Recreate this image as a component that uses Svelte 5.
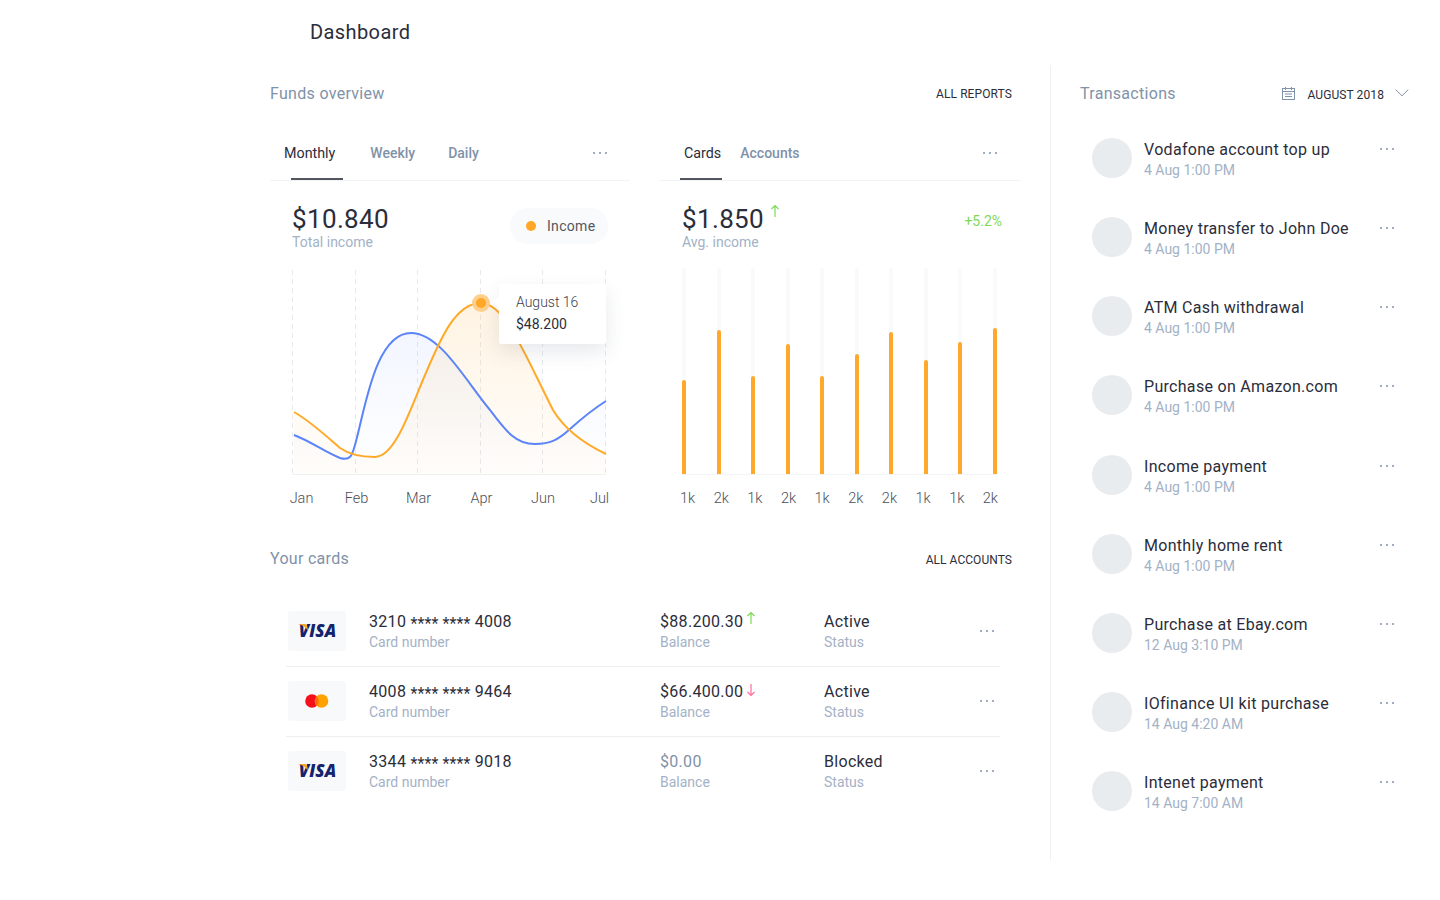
<script>
  const bars = [94, 144, 98, 130, 98, 120, 142, 114, 132, 146];
  const barLabels = ['1k', '2k', '1k', '2k', '1k', '2k', '2k', '1k', '1k', '2k'];
  const grid = [292.5, 355.5, 417.5, 480.5, 542.5, 605.5];
  const months = [
    ['Jan', 301.5], ['Feb', 356.5], ['Mar', 418.5], ['Apr', 481.5], ['Jun', 543], ['Jul', 599.5]
  ];
  const orangeLine = 'M294 412C310 421 325 435 340 448C350 455 362 457 375 457C395 457 410 410 425 375C440 340 455 303 481 303C505 303 525 355 553 410C565 430 585 444 606 454';
  const blueLine = 'M294 435C310 441 325 452 340 458C350 461 352 456 355 445C365 410 375 333 411 333C440 333 465 380 490 410C505 430 515 444 535 444C550 444 558 440 570 429C580 420 595 408 606 401';

  const cards = [
    { brand: 'visa', number: '3210', last: '4008', balance: '$88.200.30', trend: 'up', status: 'Active' },
    { brand: 'mc', number: '4008', last: '9464', balance: '$66.400.00', trend: 'down', status: 'Active' },
    { brand: 'visa', number: '3344', last: '9018', balance: '$0.00', trend: '', status: 'Blocked' }
  ];

  const transactions = [
    ['Vodafone account top up', '4 Aug 1:00 PM'],
    ['Money transfer to John Doe', '4 Aug 1:00 PM'],
    ['ATM Cash withdrawal', '4 Aug 1:00 PM'],
    ['Purchase on Amazon.com', '4 Aug 1:00 PM'],
    ['Income payment', '4 Aug 1:00 PM'],
    ['Monthly home rent', '4 Aug 1:00 PM'],
    ['Purchase at Ebay.com', '12 Aug 3:10 PM'],
    ['IOfinance UI kit purchase', '14 Aug 4:20 AM'],
    ['Intenet payment', '14 Aug 7:00 AM']
  ];
</script>

{#snippet dots()}
  <svg class="dots" width="16" height="4" viewBox="0 0 16 4">
    <circle cx="2" cy="2" r="1" /><circle cx="8" cy="2" r="1" /><circle cx="14" cy="2" r="1" />
  </svg>
{/snippet}

{#snippet arrow(color, down)}
  <svg class="arrow" class:down width="10" height="14" viewBox="0 0 10 14" fill="none" stroke={color} stroke-width="1.2">
    <path d="M5 13V1.5M1.5 5L5 1.5L8.5 5" />
  </svg>
{/snippet}

<div class="page">
  <header class="top"><h1>Dashboard</h1></header>

  <div class="content">
    <main class="left">
      <div class="section-head">
        <h2>Funds overview</h2>
        <span class="link">ALL REPORTS</span>
      </div>

      <div class="panels">
        <section>
          <div class="tabs">
            <span class="tab active monthly">Monthly</span>
            <span class="tab weekly">Weekly</span>
            <span class="tab daily">Daily</span>
            <span class="tabs-more">{@render dots()}</span>
          </div>
          <div class="stats">
            <div>
              <div class="amount">$10.840</div>
              <div class="sub">Total income</div>
            </div>
            <div class="legend"><i></i>Income</div>
          </div>
          <div class="chart">
            <svg width="360" height="260" viewBox="270 260 360 260">
              <defs>
                <linearGradient id="fillOrange" x1="0" y1="0" x2="0" y2="1">
                  <stop offset="0" stop-color="#ffa726" stop-opacity="0.13" />
                  <stop offset="1" stop-color="#ffa726" stop-opacity="0.02" />
                </linearGradient>
                <linearGradient id="fillBlue" x1="0" y1="0" x2="0" y2="1">
                  <stop offset="0" stop-color="#4d7cfe" stop-opacity="0.07" />
                  <stop offset="1" stop-color="#4d7cfe" stop-opacity="0" />
                </linearGradient>
              </defs>
              {#each grid as x}
                <line x1={x} x2={x} y1="270" y2="475" stroke="#e6e9ed" stroke-dasharray="5 4" />
              {/each}
              <line x1="292" x2="606" y1="474.5" y2="474.5" stroke="#f1f2f4" />
              <path d="{blueLine}V475H294Z" fill="url(#fillBlue)" />
              <path d="{orangeLine}V475H294Z" fill="url(#fillOrange)" />
              <path d={blueLine} fill="none" stroke="#5b84f8" stroke-width="2" />
              <path d={orangeLine} fill="none" stroke="#ffa928" stroke-width="2" />
              <circle cx="481" cy="303" r="9" fill="#ffd08c" />
              <circle cx="481" cy="303" r="5" fill="#ffa726" />
              {#each months as [label, x]}
                <text {x} y="503" text-anchor="middle" class="axis">{label}</text>
              {/each}
            </svg>
            <div class="tooltip">
              <div class="tip-date">August 16</div>
              <div class="tip-value">$48.200</div>
            </div>
          </div>
        </section>

        <section>
          <div class="tabs">
            <span class="tab active cards-tab">Cards</span>
            <span class="tab accounts">Accounts</span>
            <span class="tabs-more">{@render dots()}</span>
          </div>
          <div class="stats">
            <div>
              <div class="amount">$1.850<span class="amount-arrow">{@render arrow('#7ed957', false)}</span></div>
              <div class="sub">Avg. income</div>
            </div>
            <div class="delta">+5.2%</div>
          </div>
          <div class="bars">
            {#each bars as h}
              <div class="track"><div class="fill" style="height: {h}px"></div></div>
            {/each}
          </div>
          <div class="bar-labels">
            {#each barLabels as l}<span>{l}</span>{/each}
          </div>
        </section>
      </div>

      <div class="section-head cards-head">
        <h2>Your cards</h2>
        <span class="link">ALL ACCOUNTS</span>
      </div>

      <div class="card-list">
        {#each cards as c}
          <div class="card-row">
            <div class="brand">
              {#if c.brand === 'visa'}
                <span class="visa">VISA</span>
                <svg class="flare" width="10" height="7" viewBox="0 0 10 7"><path d="M0 0H7C8.500 0 9 1 9.300 2.500L10 6.500C8 3.500 4.500 1.200 0 0Z" fill="#f7a823" /></svg>
              {:else}
                <svg width="24" height="14" viewBox="0 0 24 14">
                  <circle cx="7" cy="7" r="6.800" fill="#f4101a" />
                  <circle cx="16.500" cy="7" r="6.800" fill="#ffa200" />
                  <path d="M11.750 2.200A6.800 6.800 0 0 1 11.750 11.800A6.800 6.800 0 0 1 11.750 2.200Z" fill="#ff6a10" />
                </svg>
              {/if}
            </div>
            <div class="col number">
              <div class="val">{c.number} <span class="stars">**** ****</span> {c.last}</div>
              <div class="sub">Card number</div>
            </div>
            <div class="col balance">
              <div class="val" class:zero={!c.trend}>
                {c.balance}{#if c.trend === 'up'}<span class="row-arrow">{@render arrow('#7ed957', false)}</span>{:else if c.trend === 'down'}<span class="row-arrow drop">{@render arrow('#ff6b9a', true)}</span>{/if}
              </div>
              <div class="sub">Balance</div>
            </div>
            <div class="col status">
              <div class="val">{c.status}</div>
              <div class="sub">Status</div>
            </div>
            <div class="row-more">{@render dots()}</div>
          </div>
        {/each}
      </div>
    </main>

    <aside class="right">
      <div class="right-head">
        <h2>Transactions</h2>
        <div class="date">
          <svg class="cal" width="15" height="15" viewBox="0 0 15 15" fill="none" stroke="#7f93ab">
            <rect x="1.500" y="2.500" width="12" height="11" />
            <path d="M4.500 1V4M10.500 1V4M1.500 5.500H13.500M4 8H11M4 10.500H11" />
          </svg>
          <span>AUGUST 2018</span>
          <svg width="14" height="8" viewBox="0 0 14 8" fill="none" stroke="#7f93ab">
            <path d="M0.700 0.700L7 6.800L13.300 0.700" />
          </svg>
        </div>
      </div>
      <div class="tx-list">
        {#each transactions as [name, when]}
          <div class="tx">
            <div class="avatar"></div>
            <div class="tx-text">
              <div class="tx-name">{name}</div>
              <div class="sub">{when}</div>
            </div>
            <div class="tx-more">{@render dots()}</div>
          </div>
        {/each}
      </div>
    </aside>
  </div>
</div>

<style>
  :global(body) {
    background: #fff;
    font-family: Roboto, "Liberation Sans", sans-serif;
    color: #2b2d3a;
  }
  .page {
    width: 1440px;
    height: 900px;
    overflow: hidden;
  }
  .top {
    height: 65px;
    padding-left: 310px;
    box-sizing: border-box;
  }
  h1 {
    margin: 0;
    padding-top: 19px;
    font-size: 20px;
    line-height: 26px;
    font-weight: 400;
    letter-spacing: 0.4px;
  }
  h2 {
    margin: 0;
    font-size: 16px;
    font-weight: 400;
    color: #7f92a8;
    letter-spacing: 0.3px;
  }
  .content {
    display: flex;
    padding-left: 270px;
  }
  .left {
    width: 781px;
    height: 795px;
    box-sizing: border-box;
    border-right: 1px solid #eef0f3;
  }
  .section-head {
    display: flex;
    align-items: center;
    justify-content: space-between;
    height: 56px;
    padding-right: 38px;
  }
  .link {
    padding-top: 2px;
    font-size: 12px;
    letter-spacing: 0.1px;
    color: #2b2d3a;
  }
  .cards-head .link {
    padding-top: 4px;
    letter-spacing: 0.05px;
  }
  .panels {
    display: grid;
    grid-template-columns: 360px 360px;
    gap: 30px;
    height: 409px;
  }
  .tabs {
    position: relative;
    display: flex;
    align-items: center;
    height: 60px;
    padding-top: 5px;
    box-sizing: border-box;
    border-bottom: 1px solid #f2f3f5;
  }
  .tab {
    position: relative;
    font-size: 14px;
    font-weight: 500;
    color: #7f92a8;
  }
  .tab.active {
    font-size: 14.3px;
    font-weight: 400;
    color: #2b2d3a;
  }
  .tab.active::after {
    content: '';
    position: absolute;
    top: 33px;
    height: 2px;
    background: #54565f;
  }
  .monthly { margin-left: 14px; }
  .monthly::after { left: 7px; width: 52px; }
  .weekly { margin-left: 35px; }
  .daily { margin-left: 33px; }
  .cards-tab { margin-left: 24px; }
  .cards-tab::after { left: -4px; width: 42px; }
  .accounts { margin-left: 19px; }
  .tabs-more {
    margin-left: auto;
    margin-right: 22px;
    display: flex;
  }
  .dots {
    display: block;
    fill: #7f93ab;
  }
  .stats {
    display: flex;
    justify-content: space-between;
    align-items: center;
    height: 79px;
    padding: 0 22px;
    box-sizing: border-box;
  }
  .stats > div:first-child {
    align-self: flex-start;
    padding-top: 21px;
  }
  .amount {
    position: relative;
    font-size: 26px;
    line-height: 34px;
    letter-spacing: 0.35px;
  }
  .amount-arrow {
    position: absolute;
    top: 2px;
    margin-left: 6px;
  }
  .sub {
    font-size: 14px;
    line-height: 20px;
    color: #a3b2c6;
  }
  .stats .sub {
    margin-top: -4px;
  }
  .legend {
    display: flex;
    align-items: center;
    height: 36px;
    width: 98px;
    box-sizing: border-box;
    padding-left: 16px;
    border-radius: 18px;
    background: #f9fafb;
    font-size: 14px;
    color: #54565f;
    align-self: flex-start;
    margin-top: 27px;
    letter-spacing: 0.3px;
  }
  .legend i {
    width: 10px;
    height: 10px;
    border-radius: 50%;
    background: #ffa726;
    margin-right: 11px;
  }
  .delta {
    align-self: flex-start;
    margin-top: 32px;
    margin-right: -4px;
    font-size: 14px;
    color: #7ed957;
  }
  .chart {
    position: relative;
    height: 260px;
  }
  .chart svg {
    display: block;
  }
  .axis {
    font-size: 14.5px;
    font-weight: 300;
    fill: #4c4e59;
  }
  .tooltip {
    position: absolute;
    left: 229px;
    top: 24px;
    width: 107px;
    height: 60px;
    box-sizing: border-box;
    padding: 8px 0 0 17px;
    background: #fff;
    border-radius: 2px;
    box-shadow: 0 8px 20px rgba(60, 70, 100, 0.12);
  }
  .tooltip::before {
    content: '';
    position: absolute;
    left: -6px;
    top: 12px;
    border: 6px solid transparent;
    border-left: 0;
    border-right-color: #fff;
  }
  .tip-date {
    font-size: 14px;
    line-height: 20px;
    font-weight: 300;
    color: #3c3e49;
  }
  .tip-value {
    font-size: 14px;
    line-height: 24px;
    color: #2b2d3a;
  }
  .bars {
    display: flex;
    justify-content: space-between;
    align-items: flex-end;
    height: 207px;
    margin: 8px 23px 0 22px;
    border-bottom: 1px solid #f3f4f6;
    box-sizing: border-box;
  }
  .track {
    position: relative;
    width: 4px;
    height: 100%;
    border-radius: 2px;
    background: #f9fafc;
  }
  .fill {
    position: absolute;
    left: 0;
    bottom: 0;
    width: 4px;
    border-radius: 2px 2px 0 0;
    background: #ffa92c;
  }
  .bar-labels {
    display: flex;
    justify-content: space-between;
    margin: 15px 22px 0 20px;
    font-size: 14.5px;
    font-weight: 300;
    color: #4c4e59;
  }
  .card-list {
    margin: 11px 50px 0 16px;
  }
  .card-row {
    position: relative;
    display: flex;
    align-items: center;
    height: 70px;
    padding-bottom: 2px;
    box-sizing: border-box;
    border-bottom: 1px solid #eceef1;
  }
  .card-row:last-child {
    border-bottom: 0;
  }
  .brand {
    position: relative;
    display: flex;
    align-items: center;
    justify-content: center;
    width: 58px;
    height: 40px;
    margin-left: 2px;
    border-radius: 3px;
    background: #f8f9fb;
  }
  .visa {
    font-family: "Open Sans", sans-serif;
    font-size: 17px;
    font-weight: 800;
    font-style: italic;
    color: #14236b;
    margin: -1px 0 0 1px;
  }
  .flare {
    position: absolute;
    left: 10px;
    top: 13px;
  }
  .col {
    position: absolute;
    top: 14px;
  }
  .col .sub,
  .tx-text .sub {
    margin-top: -1px;
  }
  .number { left: 83px; }
  .balance { left: 374px; }
  .status { left: 538px; }
  .val {
    font-size: 16px;
    line-height: 22px;
    letter-spacing: 0.3px;
    white-space: nowrap;
  }
  .val.zero {
    color: #7f92a8;
  }
  .stars {
    line-height: 1;
    letter-spacing: 0.1px;
    vertical-align: -2px;
  }
  .row-arrow {
    position: absolute;
    top: 0;
    margin-left: 3px;
  }
  .row-arrow.drop {
    top: 2px;
  }
  .arrow {
    display: block;
  }
  .arrow.down {
    transform: rotate(180deg);
  }
  .row-more {
    position: absolute;
    right: 5px;
    top: 32px;
  }
  .right {
    flex: 1;
    padding-left: 29px;
  }
  .right-head {
    display: flex;
    align-items: center;
    justify-content: space-between;
    height: 56px;
    padding-right: 31px;
  }
  .date {
    display: flex;
    align-items: center;
    font-size: 12px;
    letter-spacing: 0.1px;
  }
  .date span {
    margin: 3px 11px 0 11px;
  }
  .tx-list {
    display: flex;
    flex-direction: column;
    justify-content: space-between;
    height: 690px;
    padding: 17px 0 0 12px;
    box-sizing: border-box;
  }
  .tx {
    position: relative;
    display: flex;
    align-items: center;
    height: 40px;
  }
  .avatar {
    flex: none;
    width: 40px;
    height: 40px;
    border-radius: 50%;
    background: #e9ecef;
  }
  .tx-text {
    margin-left: 12px;
    padding-top: 3px;
  }
  .tx-name {
    font-size: 16px;
    line-height: 22px;
    letter-spacing: 0.3px;
    white-space: nowrap;
  }
  .tx-more {
    position: absolute;
    left: 287px;
    top: 9px;
  }
</style>
